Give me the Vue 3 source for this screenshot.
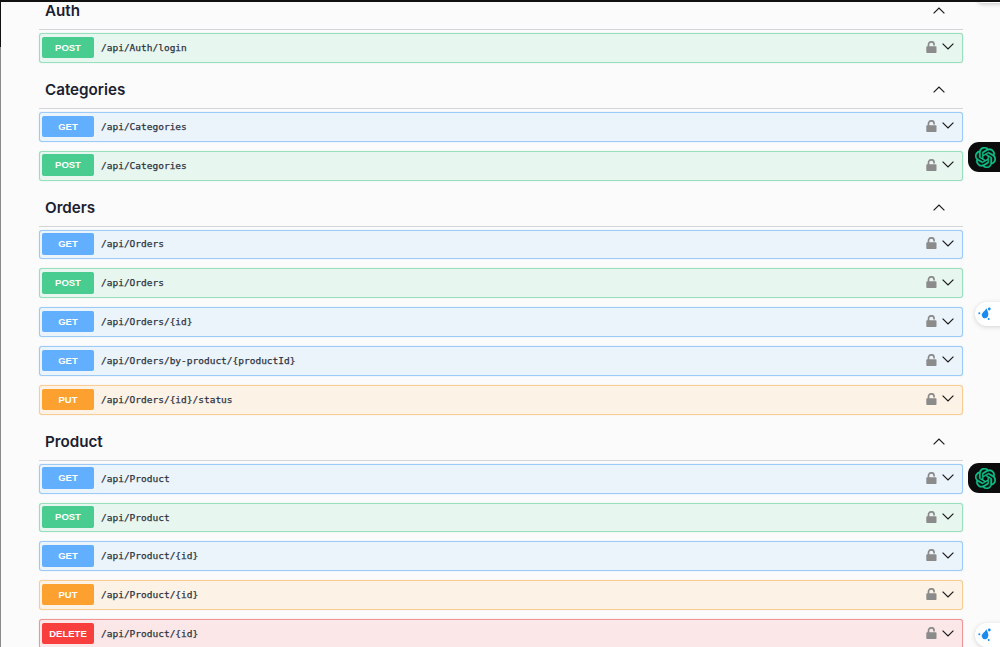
<script setup>
const sections = [
  { name: 'Auth', ops: [['POST', '/api/Auth/login']] },
  { name: 'Categories', ops: [['GET', '/api/Categories'], ['POST', '/api/Categories']] },
  { name: 'Orders', ops: [['GET', '/api/Orders'], ['POST', '/api/Orders'], ['GET', '/api/Orders/{id}'], ['GET', '/api/Orders/by-product/{productId}'], ['PUT', '/api/Orders/{id}/status']] },
  { name: 'Product', ops: [['GET', '/api/Product'], ['POST', '/api/Product'], ['GET', '/api/Product/{id}'], ['PUT', '/api/Product/{id}'], ['DELETE', '/api/Product/{id}']] }
]
const knot = 'M22.2819 9.8211a5.9847 5.9847 0 0 0-.5157-4.9108 6.0462 6.0462 0 0 0-6.5098-2.9A6.0651 6.0651 0 0 0 4.9807 4.1818a5.9847 5.9847 0 0 0-3.9977 2.9 6.0462 6.0462 0 0 0 .7427 7.0966 5.9847 5.9847 0 0 0 .511 4.9107 6.051 6.051 0 0 0 6.5146 2.9001A5.9847 5.9847 0 0 0 13.2599 24a6.0557 6.0557 0 0 0 5.7718-4.2058 5.9894 5.9894 0 0 0 3.9977-2.9001 6.0557 6.0557 0 0 0-.7475-7.0729zm-9.022 12.6081a4.4755 4.4755 0 0 1-2.8764-1.0408l.1419-.0804 4.7783-2.7582a.7948.7948 0 0 0 .3927-.6813v-6.7369l2.02 1.1686a.071.071 0 0 1 .038.052v5.5826a4.504 4.504 0 0 1-4.4945 4.4944zm-9.6607-4.1254a4.4708 4.4708 0 0 1-.5346-3.0137l.142.0852 4.783 2.7582a.7712.7712 0 0 0 .7806 0l5.8428-3.3685v2.3324a.0804.0804 0 0 1-.0332.0615L9.74 19.9502a4.4992 4.4992 0 0 1-6.1408-1.6464zM2.3408 7.8956a4.485 4.485 0 0 1 2.3655-1.9728V11.6a.7664.7664 0 0 0 .3879.6765l5.8144 3.3543-2.0201 1.1685a.0757.0757 0 0 1-.071 0l-4.8303-2.7865A4.504 4.504 0 0 1 2.3408 7.872zm16.5963 3.8558L13.1038 8.364 15.1192 7.2a.0757.0757 0 0 1 .071 0l4.8303 2.7913a4.4944 4.4944 0 0 1-.6765 8.1042v-5.6772a.79.79 0 0 0-.407-.667zm2.0107-3.0231l-.142-.0852-4.7735-2.7818a.7759.7759 0 0 0-.7854 0L9.409 9.2297V6.8974a.0662.0662 0 0 1 .0284-.0615l4.8303-2.7866a4.4992 4.4992 0 0 1 6.6802 4.66zM8.3065 12.863l-2.02-1.1638a.0804.0804 0 0 1-.038-.0567V6.0742a4.4992 4.4992 0 0 1 7.3757-3.4537l-.142.0805L8.704 5.459a.7948.7948 0 0 0-.3927.6813zm1.0976-2.3654l2.602-1.4998 2.6069 1.4998v2.9994l-2.5974 1.4997-2.6067-1.4997Z'
</script>

<template>
  <div class="page">
    <div class="topline"></div>
    <div class="edge"></div>
    <div class="corner"></div>
    <main class="list">
      <section v-for="s in sections" :key="s.name" class="tag">
        <header class="tag-head">
          <h3>{{ s.name }}</h3>
          <svg class="up" viewBox="0 0 12 7" width="12" height="7"><path d="M.6 6.400L6 1l5.400 5.400" fill="none" stroke="#1b1b1b" stroke-width="1.200"/></svg>
        </header>
        <div v-for="(op, i) in s.ops" :key="i" class="op" :class="op[0].toLowerCase()">
          <span class="method">{{ op[0] }}</span>
          <span class="path">{{ op[1] }}</span>
          <svg class="lock" viewBox="0 0 11 12" width="11" height="12">
            <path d="M2.500 6V3.600a2.800 2.800 0 0 1 5.600 0V4.500" fill="none" stroke="#8b8b8b" stroke-width="1.700"/>
            <rect x=".3" y="5.200" width="10.200" height="6.800" rx=".8" fill="#8b8b8b"/>
          </svg>
          <svg class="down" viewBox="0 0 12 7" width="12" height="7"><path d="M.6.6L6 6l5.400-5.400" fill="none" stroke="#1b1b1b" stroke-width="1.200"/></svg>
        </div>
      </section>
    </main>
    <div v-for="t in [142, 463]" :key="t" class="gpt" :style="{ top: t + 'px' }">
      <svg viewBox="0 0 24 24" width="21" height="21"><path :d="knot" fill="#10c48a" stroke="#10c48a" stroke-width=".5"/></svg>
    </div>
    <div v-for="t in [302, 623]" :key="t" class="drop" :style="{ top: t + 'px' }">
      <svg viewBox="0 0 24 24" width="24" height="24" fill="#1a8cf0">
        <path d="M11.500 6.300C12.500 9 13.600 10.500 13.300 13A3.400 3.800 0 0 1 6.700 13.500C6.500 11 9.500 9.500 11.500 6.300z"/>
        <circle cx="4.300" cy="11.300" r="1"/><circle cx="14.300" cy="7" r="1.400"/><circle cx="13.700" cy="17" r="1"/>
      </svg>
    </div>
  </div>
</template>

<style>
html, body { margin: 0; background: #fbfbfb; }
</style>

<style scoped>
.page {
  position: relative;
  width: 1000px;
  height: 647px;
  overflow: hidden;
  background: #fbfbfb;
  box-sizing: border-box;
}
.topline { position: absolute; left: 0; top: 0; width: 1000px; height: 2px; background: #111; z-index: 2; }
.edge { position: absolute; left: 0; top: 0; width: 1px; height: 647px; background: linear-gradient(#111 0 47px, #8a8a8a 47px); }
.corner { position: absolute; left: 978px; top: -6px; width: 40px; height: 9px; border-radius: 4px; background: #fbfbfb; box-shadow: 0 1px 4px rgba(0,0,0,.22); }
.list { width: 924px; margin: -7px 0 0 39px; }
.tag-head {
  display: flex;
  align-items: center;
  justify-content: space-between;
  box-sizing: border-box;
  height: 37px;
  border-bottom: 1px solid #d4d5d8;
  padding: 0 18.500px 1px 6px;
  margin-bottom: 3px;
}
h3 {
  margin: 0;
  font: 600 15.200px Inter, "Liberation Sans", sans-serif;
  color: #1a2030;
}
.op {
  display: flex;
  align-items: center;
  height: 29.850px;
  margin-bottom: 9px;
  border: 1px solid;
  border-radius: 3px;
  box-sizing: border-box;
  padding: 0 8.500px 0 2px;
}
.op.post { background: #e8f6f0; border-color: #98dfbe; box-shadow: 0 0 1px #98dfbe; }
.op.get { background: #ebf3fb; border-color: #9ccbf8; box-shadow: 0 0 1px #9ccbf8; }
.op.put { background: #fdf2e6; border-color: #f8cd94; box-shadow: 0 0 1px #f8cd94; }
.op.delete { background: #fbe7e7; border-color: #f09595; box-shadow: 0 0 1px #f09595; }
.method {
  width: 52px;
  height: 21.500px;
  margin-bottom: 1px;
  border-radius: 2px;
  color: #fff;
  text-align: center;
  font: 700 9.500px/21.500px "Liberation Sans", sans-serif;
}
.post .method { background: #49cc90; }
.get .method { background: #61affe; }
.put .method { background: #fca130; }
.delete .method { background: #f93e3e; }
.path {
  flex: 1;
  margin: 0 0 1px 7px;
  font: 400 9.500px "DejaVu Sans Mono", monospace;
  -webkit-text-stroke: .25px #2d3340;
  color: #2d3340;
}
.lock { margin: 0 4.500px 2px 0; }
.down { margin-bottom: 2px; }
.gpt {
  position: absolute;
  left: 968px;
  width: 40px;
  height: 30px;
  border-radius: 11px 0 0 11px;
  background: #0c0c0c;
  display: flex;
  align-items: center;
  padding-left: 6.500px;
  box-sizing: border-box;
}
.drop {
  position: absolute;
  left: 975px;
  width: 40px;
  height: 24px;
  border-radius: 12px 0 0 12px;
  background: #fff;
  box-shadow: 0 1px 5px rgba(0,0,0,.16);
}
.drop svg { display: block; }
</style>
